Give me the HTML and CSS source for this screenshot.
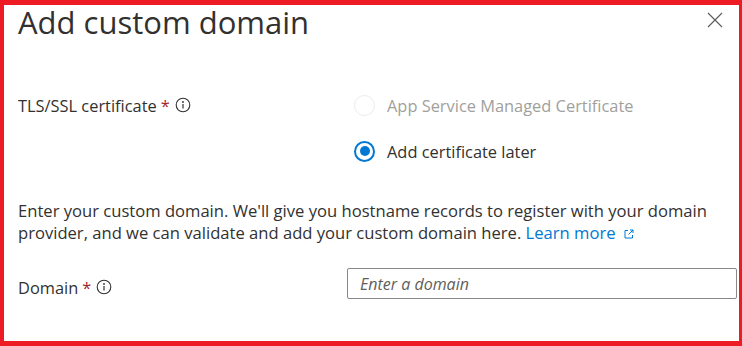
FILE: index.html
```html
<!DOCTYPE html>
<html lang="en">
<head>
    <meta charset="UTF-8">
    <meta name="viewport" content="width=device-width, initial-scale=1.0">
    <title>Add custom domain</title>
    <link rel="stylesheet" href="styles.css">
</head>
<body>
    <div class="frame">
        <div class="panel-header">
            <h1 class="panel-title">Add custom domain</h1>
            <button class="close-btn" aria-label="Close">
                <svg width="16" height="16" viewBox="0 0 16 16">
                    <path d="M1 1 L15 15 M15 1 L1 15" stroke="#605e5c" stroke-width="1.2" fill="none"/>
                </svg>
            </button>
        </div>

        <div class="field-row cert-row">
            <div class="field-label">
                TLS/SSL certificate <span class="required">*</span>
                <svg class="info-icon" width="16" height="16" viewBox="0 0 16 16">
                    <circle cx="8" cy="8" r="6.8" stroke="#323130" stroke-width="1.1" fill="none"/>
                    <circle cx="8" cy="5" r="0.9" fill="#323130"/>
                    <path d="M8 7 V11.6" stroke="#323130" stroke-width="1.2"/>
                </svg>
            </div>
            <div class="radio-group">
                <label class="radio-option disabled">
                    <span class="radio"></span>
                    App Service Managed Certificate
                </label>
                <label class="radio-option">
                    <span class="radio checked"></span>
                    Add certificate later
                </label>
            </div>
        </div>

        <p class="description">
            Enter your custom domain. We'll give you hostname records to register with your domain
            provider, and we can validate and add your custom domain here.
            <a href="#" class="learn-more">Learn more<svg width="12" height="12" viewBox="0 0 12 12">
                    <path d="M2 2.5 H5 M2 2.5 V10 H9.5 V7 M7 2 H10 V5 M10 2 L5.5 6.5" stroke="#0078d4" stroke-width="1" fill="none"/>
                </svg></a>
        </p>

        <div class="field-row domain-row">
            <div class="field-label">
                Domain <span class="required">*</span>
                <svg class="info-icon" width="16" height="16" viewBox="0 0 16 16">
                    <circle cx="8" cy="8" r="6.8" stroke="#323130" stroke-width="1.1" fill="none"/>
                    <circle cx="8" cy="5" r="0.9" fill="#323130"/>
                    <path d="M8 7 V11.6" stroke="#323130" stroke-width="1.2"/>
                </svg>
            </div>
            <input type="text" class="domain-input" placeholder="Enter a domain">
        </div>
    </div>
</body>
</html>
```

FILE: styles.css
```css
body {
    margin: 0;
    padding: 0;
    font-family: "Open Sans", "Noto Sans", sans-serif;
    color: #323130;
    background-color: #ffffff;
}

.frame {
    box-sizing: border-box;
    width: 742px;
    height: 346px;
    border-style: solid;
    border-color: #ed1c24;
    border-width: 5px 3px 5px 4px;
    padding: 0 0 0 14px;
    overflow: hidden;
}

.panel-header {
    display: flex;
    justify-content: space-between;
    align-items: flex-start;
    padding-right: 16px;
}

.panel-title {
    margin: 0;
    font-size: 31px;
    font-weight: 400;
    line-height: 34px;
    color: #323130;
}

.close-btn {
    background: none;
    border: none;
    padding: 0;
    margin-top: 7px;
    width: 16px;
    height: 16px;
    cursor: pointer;
}

.field-row {
    display: grid;
    grid-template-columns: 329px 1fr;
    font-size: 16.4px;
}

.cert-row {
    margin-top: 55px;
}

.field-label {
    display: flex;
    align-items: center;
    gap: 4px;
    height: 22px;
}

.required {
    color: #a4262c;
}

.info-icon {
    margin-left: 1px;
}

.radio-group {
    display: flex;
    flex-direction: column;
    gap: 24px;
    padding-left: 7px;
}

.radio-option {
    display: flex;
    align-items: center;
    gap: 12px;
    height: 22px;
}

.radio-option.disabled {
    color: #a19f9d;
}

.radio {
    box-sizing: border-box;
    width: 21px;
    height: 21px;
    border-radius: 50%;
    border: 1px solid #edebe9;
    display: inline-block;
    position: relative;
}

.radio.checked {
    border: 2px solid #0078d4;
}

.radio.checked::after {
    content: "";
    position: absolute;
    left: 3.5px;
    top: 3.5px;
    width: 10px;
    height: 10px;
    border-radius: 50%;
    background-color: #0078d4;
}

.description {
    margin: 38px 0 0 0;
    font-size: 16.6px;
    line-height: 22px;
    width: 710px;
}

.learn-more {
    color: #0078d4;
    text-decoration: none;
}

.learn-more svg {
    margin-left: 7px;
    vertical-align: -1px;
}

.domain-row {
    margin-top: 24px;
    align-items: start;
}

.domain-row .field-label {
    margin-top: 8px;
}

.domain-input {
    box-sizing: border-box;
    width: 390px;
    height: 31px;
    border: 1px solid #8a8886;
    border-radius: 2px;
    padding: 0 12px;
    font-family: "Open Sans", "Noto Sans", sans-serif;
    font-size: 16px;
    color: #323130;
}

.domain-input::placeholder {
    color: #605e5c;
    font-style: italic;
}
```
